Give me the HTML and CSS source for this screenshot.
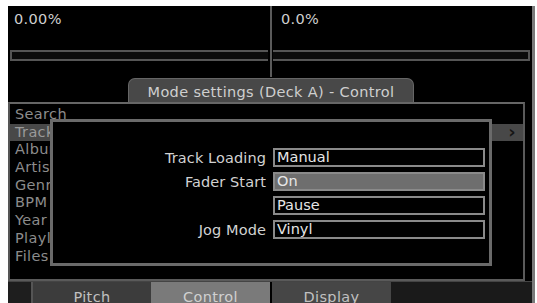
FILE: index.html
```html
<!DOCTYPE html>
<html>
<head>
<meta charset="utf-8">
<link rel="stylesheet" href="styles.css">
</head>
<body>
<div class="screen">
  <div class="top">
    <div class="deck deck-a">
      <div class="readout">0.00%</div>
      <div class="bar"></div>
    </div>
    <div class="deck deck-b">
      <div class="readout">0.0%</div>
      <div class="bar"></div>
    </div>
  </div>
  <div class="tabrow">
    <div class="title-tab">Mode settings (Deck A) - Control</div>
  </div>
  <div class="panel">
    <ul class="list">
      <li>Search</li>
      <li class="sel">Track<span class="arrow">›</span></li>
      <li>Album</li>
      <li>Artist</li>
      <li>Genre</li>
      <li>BPM</li>
      <li>Year</li>
      <li>Playlist</li>
      <li>Files</li>
    </ul>
    <div class="dialog">
      <div class="form">
        <div class="label">Track Loading</div>
        <div class="field">Manual</div>
        <div class="label">Fader Start</div>
        <div class="field active">On</div>
        <div class="label"></div>
        <div class="field">Pause</div>
        <div class="label">Jog Mode</div>
        <div class="field">Vinyl</div>
      </div>
    </div>
  </div>
  <div class="tabs">
    <div class="tab stub"></div>
    <div class="tab pitch">Pitch</div>
    <div class="tab control">Control</div>
    <div class="tab display">Display</div>
    <div class="tab rest"></div>
  </div>
</div>
</body>
</html>
```
FILE: styles.css
```css
html, body {
  margin: 0;
  padding: 0;
  background: #ffffff;
}
body {
  font-family: "DejaVu Sans", "Liberation Sans", sans-serif;
  font-size: 14.5px;
  letter-spacing: 0.35px;
}
.screen {
  margin: 6px 0 0 8px;
  width: 524px;
  height: 297px;
  background: #000;
  border-right: 3px solid #7a7a7a;
  display: flex;
  flex-direction: column;
  overflow: hidden;
  position: relative;
}
.top {
  display: flex;
  height: 71px;
  flex: none;
}
.deck {
  box-sizing: border-box;
  padding: 4px 2px 0 2px;
}
.deck-a {
  width: 264px;
  border-right: 2px solid #5a5a5a;
}
.deck-b {
  flex: 1;
  padding-left: 1px;
}
.readout {
  color: #cfcfcf;
  line-height: 18px;
  padding-left: 4px;
  height: 40px;
}
.deck-b .readout {
  padding-left: 8px;
}
.bar {
  height: 7px;
  border-top: 2px solid #555;
  border-bottom: 2px solid #555;
  border-left: 2px solid #555;
  background: #0b0b0b;
}
.deck-b .bar {
  border-left: none;
  border-right: 2px solid #555;
}
.tabrow {
  height: 25px;
  flex: none;
  display: flex;
  align-items: flex-end;
}
.title-tab {
  margin-left: 120px;
  width: 286px;
  height: 24px;
  box-sizing: border-box;
  background: #484848;
  border: 1px solid #666;
  border-bottom: none;
  border-radius: 7px 7px 0 0;
  color: #cfcfcf;
  text-align: center;
  line-height: 26px;
}
.panel {
  position: relative;
  height: 179px;
  flex: none;
  width: 517px;
  box-sizing: border-box;
  border-top: 2px solid #666;
  border-left: 2px solid #555;
  border-right: 2px solid #5a5a5a;
  border-bottom: 2px solid #5a5a5a;
}
.list {
  list-style: none;
  margin: 0;
  padding: 2px 0 0 0;
}
.list li {
  color: #8c8c8c;
  line-height: 17.7px;
  height: 17.7px;
  padding-left: 5px;
  position: relative;
}
.list li.sel {
  background: #484848;
  color: #9a9a9a;
}
.arrow {
  position: absolute;
  right: 7px;
  top: -1px;
  color: #151515;
  font-weight: bold;
  font-size: 18px;
}
.dialog {
  position: absolute;
  left: 40px;
  top: 15px;
  width: 442px;
  height: 147px;
  box-sizing: border-box;
  border: 3px solid #6a6a6a;
  background: #000;
}
.form {
  display: grid;
  grid-template-columns: 213px 212px;
  grid-auto-rows: 19px;
  column-gap: 7px;
  row-gap: 5px;
  padding-top: 26px;
}
.label {
  color: #d2d2d2;
  text-align: right;
  line-height: 20px;
  letter-spacing: 0.1px;
}
.field {
  box-sizing: border-box;
  border: 2px solid #8a8a8a;
  color: #e6e6e6;
  padding-left: 2px;
  line-height: 15px;
  letter-spacing: 0;
}
.field.active {
  background: #6e6e6e;
}
.tabs {
  display: flex;
  flex: 1;
  border-top: 1px solid #444;
}
.tab {
  color: #c0c0c0;
  text-align: center;
  line-height: 30px;
  box-sizing: border-box;
}
.stub {
  width: 25px;
  background: #1e1e1e;
  border-right: 2px solid #555;
}
.pitch {
  width: 118px;
  background: #3c3c3c;
}
.control {
  width: 119px;
  background: #7a7a7a;
  color: #d0d0d0;
  margin-right: 2px;
}
.display {
  width: 119px;
  background: #464646;
}
.rest {
  flex: 1;
  background: #1a1a1a;
}
```
